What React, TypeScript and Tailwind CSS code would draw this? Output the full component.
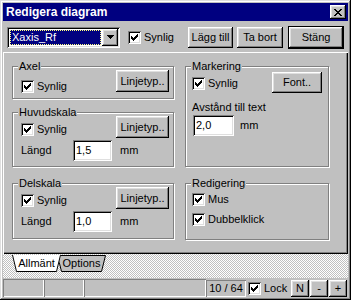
import React from 'react';

const raised =
  'shadow-[inset_-1px_-1px_#000,inset_1px_1px_#fff,inset_-2px_-2px_#808080,inset_2px_2px_#dfdfdf]';
const sunken =
  'shadow-[inset_1px_1px_#808080,inset_-1px_-1px_#fff,inset_2px_2px_#000,inset_-2px_-2px_#dfdfdf]';
const thinSunken = 'shadow-[inset_1px_1px_#808080,inset_-1px_-1px_#fff]';

const Check: React.FC = () => (
  <span className={`w-[13px] h-[13px] bg-white shrink-0 flex items-center justify-center ${sunken}`}>
    <svg width="7" height="7" viewBox="0 0 7 7" shapeRendering="crispEdges">
      <path
        fill="#000"
        d="M6 0h1v1h-1z M5 1h2v1h-2z M0 2h1v1h-1z M4 2h3v1h-3z M0 3h2v1h-2z M3 3h3v1h-3z M0 4h5v1h-5z M1 5h3v1h-3z M2 6h1v1h-1z"
      />
    </svg>
  </span>
);

const CheckLabel: React.FC<{ label: string; className?: string }> = ({ label, className = '' }) => (
  <div className={`flex items-center gap-[3px] ${className}`}>
    <Check />
    <span className="leading-[13px]">{label}</span>
  </div>
);

const Button: React.FC<{ label: string; className?: string }> = ({ label, className = '' }) => (
  <div className={`bg-[#c0c0c0] flex items-center justify-center shrink-0 ${raised} ${className}`}>
    <span className="leading-[13px]">{label}</span>
  </div>
);

const Field: React.FC<{ value: string; className?: string }> = ({ value, className = '' }) => (
  <div className={`bg-white h-[21px] pl-[3px] flex items-center shrink-0 ${sunken} ${className}`}>
    <span className="leading-[13px]">{value}</span>
  </div>
);

const Group: React.FC<{ label: string; className?: string; children: React.ReactNode }> = ({
  label,
  className = '',
  children,
}) => (
  <div className={`relative border border-[#808080] shadow-[inset_1px_1px_#fff,1px_1px_#fff] ${className}`}>
    <span className="absolute -top-[7px] left-[5px] px-[1px] bg-[#c0c0c0] leading-[13px]">{label}</span>
    {children}
  </div>
);

const ScaleGroup: React.FC<{ label: string; value: string; className?: string }> = ({ label, value, className }) => (
  <Group label={label} className={className}>
    <div className="flex justify-between items-start pl-[8px] pr-[4px] pt-[3px]">
      <CheckLabel label="Synlig" className="mt-[7px]" />
      <Button label="Linjetyp.." className="w-[53px] h-[22px]" />
    </div>
    <div className="flex items-center pl-[8px] mt-[2px]">
      <span className="w-[52px] leading-[13px]">Längd</span>
      <Field value={value} className="w-[39px]" />
      <span className="ml-[8px] leading-[13px]">mm</span>
    </div>
  </Group>
);

const Tab: React.FC<{ label: string; active?: boolean; className?: string }> = ({ label, active, className = '' }) => (
  <div className={`relative w-[49px] h-[17px] flex items-center justify-center ${className}`}>
    <svg className="absolute inset-0" width="49" height="17" viewBox="0 0 49 17">
      {active ? (
        <>
          <polygon points="0,0 49,0 45,17 4,17" fill="#fff" />
          <polyline points="0.5,0 4.5,16.5 44.5,16.5 48.5,0" fill="none" stroke="#000" />
        </>
      ) : (
        <polygon points="0.5,0.5 48.5,0.5 44.5,16.5 4.5,16.5" fill="#c0c0c0" stroke="#000" />
      )}
    </svg>
    <span className="relative leading-[13px]">{label}</span>
  </div>
);

export default function App() {
  return (
    <div
      className={`w-[351px] h-[300px] bg-[#c0c0c0] p-[3px] flex flex-col text-[11px] text-black font-['Liberation_Sans',Arial,sans-serif] shadow-[inset_-1px_-1px_#000,inset_1px_1px_#dfdfdf,inset_-2px_-2px_#808080,inset_2px_2px_#fff]`}
    >
      {/* title bar */}
      <div className="h-[18px] bg-[#000080] flex items-center justify-between pl-[3px] pr-[2px] shrink-0">
        <span className="text-white font-bold text-[12px] leading-[14px]">Redigera diagram</span>
        <div className={`w-[16px] h-[14px] bg-[#c0c0c0] flex items-center justify-center ${raised}`}>
          <svg width="8" height="7" viewBox="0 0 8 7" shapeRendering="crispEdges">
            <path
              fill="#000"
              d="M0 0h2v1h-2z M6 0h2v1h-2z M1 1h2v1h-2z M5 1h2v1h-2z M2 2h4v1h-4z M3 3h2v1h-2z M2 4h4v1h-4z M1 5h2v1h-2z M5 5h2v1h-2z M0 6h2v1h-2z M6 6h2v1h-2z"
            />
          </svg>
        </div>
      </div>

      {/* toolbar */}
      <div className="h-[31px] flex items-center pl-[4px] pr-[4px] pt-[1px] shrink-0">
        <div className={`w-[113px] h-[21px] bg-white p-[2px] flex ${sunken}`}>
          <div className="flex-1 m-[1px] bg-[#000080] border border-dotted border-[#ffff80] flex items-center pl-[1px]">
            <span className="text-white leading-[13px]">Xaxis_Rf</span>
          </div>
          <div className={`w-[16px] h-full bg-[#c0c0c0] flex items-center justify-center ${raised}`}>
            <svg width="7" height="4" viewBox="0 0 7 4" shapeRendering="crispEdges">
              <path fill="#000" d="M0 0h7v1h-7z M1 1h5v1h-5z M2 2h3v1h-3z M3 3h1v1h-1z" />
            </svg>
          </div>
        </div>
        <CheckLabel label="Synlig" className="ml-[8px]" />
        <div className="ml-auto flex items-center">
          <Button label="Lägg till" className="w-[45px] h-[21px]" />
          <Button label="Ta bort" className="w-[46px] h-[21px] ml-[4px]" />
          <div className="ml-[5px] border border-black">
            <Button label="Stäng" className="w-[54px] h-[21px]" />
          </div>
        </div>
      </div>

      {/* page */}
      <div className="h-[202px] shrink-0 flex pl-[9px] pt-[14px] gap-[11px] shadow-[inset_1px_1px_#fff,inset_-1px_-1px_#000,inset_-2px_-2px_#808080]">
        <div className="w-[162px] flex flex-col">
          <Group label="Axel" className="h-[33px]">
            <div className="flex justify-between items-start pl-[8px] pr-[4px] pt-[3px]">
              <CheckLabel label="Synlig" className="mt-[10px]" />
              <Button label="Linjetyp.." className="w-[53px] h-[22px]" />
            </div>
          </Group>
          <ScaleGroup label="Huvudskala" value="1,5" className="h-[55px] mt-[13px]" />
          <ScaleGroup label="Delskala" value="1,0" className="h-[56px] mt-[16px]" />
        </div>
        <div className="w-[144px] flex flex-col">
          <Group label="Markering" className="h-[101px]">
            <div className="flex justify-between items-start pl-[6px] pr-[6px] pt-[5px]">
              <CheckLabel label="Synlig" className="mt-[5px]" />
              <Button label="Font.." className="w-[50px] h-[21px]" />
            </div>
            <div className="pl-[6px] mt-[8px] leading-[13px]">Avstånd till text</div>
            <div className="flex items-center pl-[7px] mt-[1px]">
              <Field value="2,0" className="w-[41px]" />
              <span className="ml-[6px] leading-[13px]">mm</span>
            </div>
          </Group>
          <Group label="Redigering" className="h-[57px] mt-[16px]">
            <div className="flex flex-col gap-[7px] pl-[6px] pt-[9px]">
              <CheckLabel label="Mus" />
              <CheckLabel label="Dubbelklick" />
            </div>
          </Group>
        </div>
      </div>

      {/* sheet tabs */}
      <div className="h-[24px] shrink-0 flex items-start pl-[9px] pt-[1px] bg-[image:repeating-conic-gradient(#c0c0c0_0%_25%,#fff_0%_50%)] bg-[length:2px_2px]">
        <Tab label="Allmänt" active className="z-10" />
        <Tab label="Options" className="-ml-[4px]" />
      </div>

      {/* status bar */}
      <div className="h-[19px] shrink-0 flex items-end">
        <div className={`w-[41px] h-[18px] ${thinSunken}`} />
        <div className={`w-[40px] h-[18px] ${thinSunken}`} />
        <div className={`w-[122px] h-[18px] ${thinSunken}`} />
        <div className={`w-[40px] h-[17px] flex items-center justify-center ${thinSunken}`}>
          <span className="leading-[13px]">10 / 64</span>
        </div>
        <div className="flex items-center h-[17px] ml-[2px]">
          <Check />
          <span className="ml-[3px] w-[27px] leading-[13px]">Lock</span>
          <Button label="N" className="w-[18px] h-[17px]" />
          <Button label="-" className="w-[18px] h-[17px] ml-[1px]" />
          <Button label="+" className="w-[18px] h-[17px] ml-[1px]" />
        </div>
      </div>
    </div>
  );
}
